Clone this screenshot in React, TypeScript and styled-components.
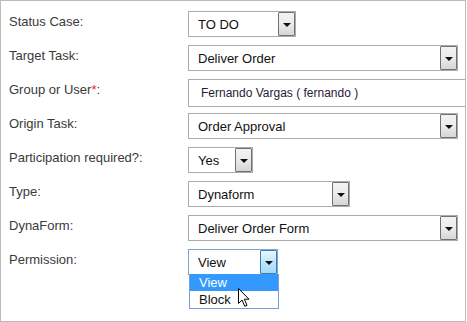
import React from 'react';
import styled, { createGlobalStyle } from 'styled-components';

const Global = createGlobalStyle`
  html, body { margin: 0; padding: 0; background: #fff; }
  body { font-family: Arial, "Liberation Sans", sans-serif; }
`;

const Frame = styled.div`
  position: relative;
  width: 466px;
  height: 322px;
  box-sizing: border-box;
  border: 1px solid #bcbcbc;
  overflow: hidden;
  padding: 6px 0 0 8px;
`;

const Row = styled.div`
  display: grid;
  grid-template-columns: 179px 1fr;
  height: 34px;
`;

const Label = styled.div`
  padding-top: 7px;
  font-size: 13px;
  line-height: 15px;
  color: #3a3a3a;
  white-space: nowrap;
`;

const Req = styled.span`
  color: #e8262a;
`;

const Cell = styled.div`
  position: relative;
  padding-top: 4px;
`;

const SelectBox = styled.div<{ $w: number; $focus?: boolean }>`
  position: relative;
  display: flex;
  align-items: center;
  box-sizing: border-box;
  width: ${(p) => p.$w}px;
  height: 26px;
  border: 1px solid ${(p) => (p.$focus ? '#7ea4d6' : '#ababab')};
  background: #fff;
  padding-left: 9px;
  font-size: 13px;
  color: #111;
`;

const Value = styled.span`
  flex: 1;
  white-space: nowrap;
  line-height: 15px;
`;

const DropBtn = styled.div<{ $focus?: boolean }>`
  display: flex;
  align-items: center;
  justify-content: center;
  box-sizing: border-box;
  width: 17px;
  height: 24px;
  margin-right: 0;
  border: 1px solid ${(p) => (p.$focus ? '#3c7fb1' : '#707070')};
  border-radius: 1px;
  background: ${(p) =>
    p.$focus
      ? 'linear-gradient(#eaf6fd, #bee6fd 50%, #a7d9f5)'
      : 'linear-gradient(#f3f3f3, #ebebeb 50%, #d6d6d6)'};
`;

const Arrow = styled.span`
  width: 0;
  height: 0;
  border-left: 4px solid transparent;
  border-right: 4px solid transparent;
  border-top: 4px solid #111;
  margin-top: 1px;
`;

const TextBox = styled.div`
  display: flex;
  align-items: center;
  box-sizing: border-box;
  width: 300px;
  height: 28px;
  border: 1px solid #ababab;
  padding-left: 12px;
  font-size: 12px;
  color: #2a1a3a;
  white-space: nowrap;
`;

const List = styled.div`
  position: absolute;
  left: 0;
  top: 100%;
  box-sizing: border-box;
  width: 90px;
  border: 1px solid #7a9cd3;
  border-top: none;
  background: #fff;
  font-size: 13px;
  z-index: 2;
`;

const Option = styled.div<{ $active?: boolean }>`
  height: 17px;
  line-height: 17px;
  padding-left: 9px;
  background: ${(p) => (p.$active ? '#3399ff' : '#fff')};
  color: ${(p) => (p.$active ? '#fff' : '#111')};
`;

const Cursor = styled.svg`
  position: absolute;
  left: 236px;
  top: 286px;
  z-index: 3;
`;

type SelectProps = { value: string; w: number; focus?: boolean; children?: React.ReactNode };

const Select = ({ value, w, focus, children }: SelectProps) => (
  <SelectBox $w={w} $focus={focus}>
    <Value>{value}</Value>
    <DropBtn $focus={focus}>
      <Arrow />
    </DropBtn>
    {children}
  </SelectBox>
);

export default function App() {
  return (
    <>
      <Global />
      <Frame>
        <Row>
          <Label>Status Case:</Label>
          <Cell><Select value="TO DO" w={108} /></Cell>
        </Row>
        <Row>
          <Label>Target Task:</Label>
          <Cell><Select value="Deliver Order" w={270} /></Cell>
        </Row>
        <Row>
          <Label>Group or User<Req>*</Req>:</Label>
          <Cell><TextBox>Fernando Vargas ( fernando )</TextBox></Cell>
        </Row>
        <Row>
          <Label>Origin Task:</Label>
          <Cell><Select value="Order Approval" w={270} /></Cell>
        </Row>
        <Row>
          <Label>Participation required?:</Label>
          <Cell><Select value="Yes" w={65} /></Cell>
        </Row>
        <Row>
          <Label>Type:</Label>
          <Cell><Select value="Dynaform" w={162} /></Cell>
        </Row>
        <Row>
          <Label>DynaForm:</Label>
          <Cell><Select value="Deliver Order Form" w={270} /></Cell>
        </Row>
        <Row>
          <Label>Permission:</Label>
          <Cell>
            <Select value="View" w={90} focus>
              <List>
                <Option $active>View</Option>
                <Option>Block</Option>
              </List>
            </Select>
          </Cell>
        </Row>
        <Cursor width="13" height="21" viewBox="0 0 13 21">
          <path
            d="M1.5 1.5 L1.5 16.5 L5 13 L7.8 19.3 L10 18.3 L7.3 12.2 L12 12.2 Z"
            fill="#fff"
            stroke="#000"
            strokeWidth="1"
            strokeLinejoin="miter"
          />
        </Cursor>
      </Frame>
    </>
  );
}
